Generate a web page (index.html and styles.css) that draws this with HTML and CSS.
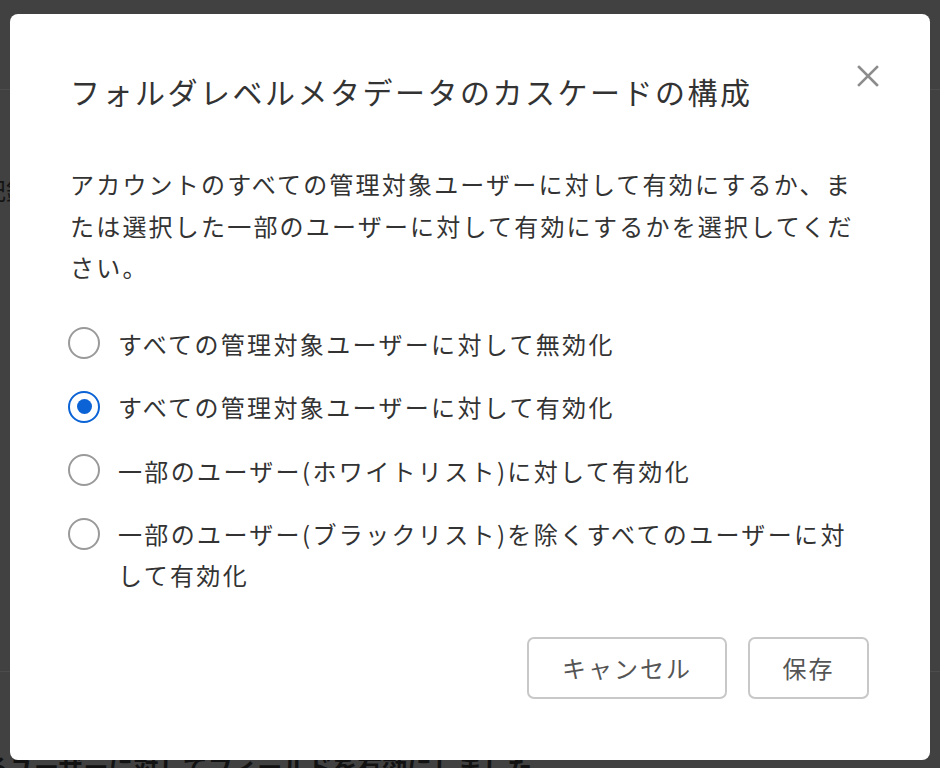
FILE: index.html
```html
<!DOCTYPE html>
<html lang="ja">
<head>
<meta charset="utf-8">
<title>フォルダレベルメタデータのカスケードの構成</title>
<link rel="stylesheet" href="styles.css">
</head>
<body>
<div class="page">
  <div class="page-header"></div>
  <div class="page-row page-row-first"><span class="page-label">記録</span></div>
  <div class="page-row page-row-bottom"></div>
  <div class="page-notice">るユーザーに対してフィールドを有効にしました</div>
</div>

<div class="backdrop">
  <div class="modal" role="dialog" aria-labelledby="dlg-title">
    <button class="close" aria-label="閉じる">
      <svg width="22" height="22" viewBox="0 0 22 22"><path d="M2 2 L20 20 M20 2 L2 20" stroke="#8c8c8c" stroke-width="2.6" stroke-linecap="square" fill="none"/></svg>
    </button>
    <h1 class="title" id="dlg-title">フォルダレベルメタデータのカスケードの構成</h1>
    <p class="desc">アカウントのすべての管理対象ユーザーに対して有効にするか、または選択した一部のユーザーに対して有効にするかを選択してください。</p>
    <div class="options">
      <label class="option"><span class="radio"></span><span class="label">すべての管理対象ユーザーに対して無効化</span></label>
      <label class="option"><span class="radio checked"></span><span class="label">すべての管理対象ユーザーに対して有効化</span></label>
      <label class="option"><span class="radio"></span><span class="label">一部のユーザー(ホワイトリスト)に対して有効化</span></label>
      <label class="option"><span class="radio"></span><span class="label">一部のユーザー(ブラックリスト)を除くすべてのユーザーに対して有効化</span></label>
    </div>
    <div class="actions">
      <button class="btn btn-cancel">キャンセル</button>
      <button class="btn btn-save">保存</button>
    </div>
  </div>
</div>
</body>
</html>
```
FILE: styles.css
```css
* { box-sizing: border-box; }
html, body { margin: 0; padding: 0; }
body {
  background: #414141;
  font-family: "Noto Sans CJK JP", "Noto Sans", sans-serif;
  width: 940px;
  height: 768px;
  overflow: hidden;
}
.page { display: flex; flex-direction: column; height: 768px; }
.page-header { height: 90px; border-bottom: 1px solid #4c4c4c; flex: none; }
.page-row-first { height: 130px; padding-top: 84px; flex: none; }
.page-label {
  display: inline-block;
  margin-left: -18px;
  font-size: 24px;
  line-height: 32px;
  color: #141414;
}
.page-row-bottom { height: 452px; border-bottom: 1px solid #4c4c4c; flex: none; }
.page-notice {
  margin-top: 79px;
  margin-left: -16px;
  font-size: 25px;
  font-weight: 700;
  line-height: 30px;
  color: #121212;
  white-space: nowrap;
  letter-spacing: 0;
  flex: none;
}

.backdrop { position: fixed; inset: 0; }
.modal {
  position: absolute;
  left: 10px;
  top: 14px;
  width: 920px;
  height: 746px;
  background: #fff;
  border-radius: 8px;
  padding: 57px 61px 61px 60px;
  display: flex;
  flex-direction: column;
  color: #333;
}
.close {
  position: absolute;
  right: 46px;
  top: 46px;
  width: 32px;
  height: 32px;
  padding: 0;
  border: 0;
  background: none;
  display: flex;
  align-items: center;
  justify-content: center;
}
.title {
  margin: 0;
  font-size: 30px;
  line-height: 40px;
  font-weight: 400;
  letter-spacing: 2.5px;
  color: #333;
}
.desc {
  margin: 52px 0 0;
  font-size: 24px;
  line-height: 41.5px;
  letter-spacing: 2.2px;
  color: #333;
}
.options {
  margin-top: 35px;
  margin-left: -2px;
  display: flex;
  flex-direction: column;
  gap: 22.5px;
}
.option {
  display: flex;
  align-items: flex-start;
  gap: 18px;
  padding-right: 6px;
}
.radio {
  flex: none;
  width: 32px;
  height: 32px;
  margin-top: 4.5px;
  border: 2px solid #9a9a9a;
  border-radius: 50%;
  display: flex;
  align-items: center;
  justify-content: center;
}
.radio.checked { border-color: #0b63d6; }
.radio.checked::after {
  content: "";
  width: 15px;
  height: 15px;
  border-radius: 50%;
  background: #0b63d6;
}
.label {
  font-size: 24px;
  line-height: 41px;
  letter-spacing: 2.35px;
  color: #333;
}
.actions {
  margin-top: auto;
  display: flex;
  justify-content: flex-end;
  gap: 21px;
}
.btn {
  height: 62px;
  padding: 0;
  border: 2px solid #c8c8c8;
  border-radius: 7px;
  background: #fff;
  font-family: "Noto Sans CJK JP", "Noto Sans", sans-serif;
  font-size: 24px;
  line-height: 30px;
  letter-spacing: 2px;
  white-space: nowrap;
  text-align: center;
  color: #555;
}
.btn-cancel { width: 200px; }
.btn-save { width: 121px; }
```
